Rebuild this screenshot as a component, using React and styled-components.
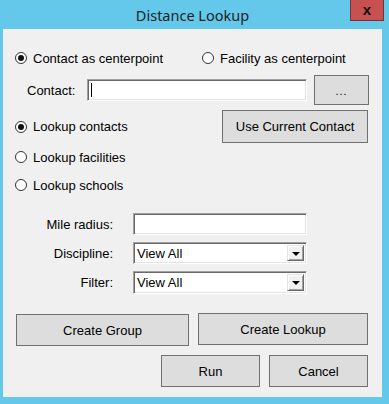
import React from "react";
import styled, { createGlobalStyle } from "styled-components";

const Global = createGlobalStyle`
  html, body { margin: 0; padding: 0; background: #63c8ea; }
  * { box-sizing: border-box; }
`;

const Frame = styled.div`
  width: 389px;
  height: 404px;
  background: #63c8ea;
  padding: 0 7px 7px 3px;
  display: flex;
  flex-direction: column;
  font-family: "Liberation Sans", Arial, sans-serif;
  font-size: 13px;
  color: #000;
`;

const TitleBar = styled.div`
  height: 29px;
  display: grid;
  grid-template-columns: 1fr auto 1fr;
  align-items: start;
`;

const Title = styled.div`
  grid-column: 2;
  font-family: "Noto Sans", "Open Sans", sans-serif;
  font-size: 14.5px;
  line-height: 20px;
  margin-top: 5px;
  color: #1e1e1e;
`;

const CloseButton = styled.div`
  grid-column: 3;
  justify-self: end;
  margin-right: -2px;
  width: 34px;
  height: 21px;
  background: #c75050;
  border: 1px solid #7d3030;
  border-top: none;
  display: flex;
  align-items: center;
  justify-content: center;
  font-family: "Liberation Sans", Arial, sans-serif;
  font-weight: bold;
  font-size: 15px;
  line-height: 1;
  color: #111;
  padding-bottom: 2px;
`;

const Client = styled.div`
  flex: 1;
  background: #f0f0f0;
  padding: 21px 14px 0 12px;
  display: flex;
  flex-direction: column;
`;

const RadioRow = styled.div`
  display: grid;
  grid-template-columns: 187px 1fr;
  height: 16px;
  align-items: center;
`;

const RadioLabel = styled.label`
  display: inline-flex;
  align-items: center;
  gap: 6px;
  height: 16px;
  white-space: nowrap;
`;

const Circle = styled.span`
  width: 12px;
  height: 12px;
  border-radius: 50%;
  border: 1px solid #333;
  background: #fff;
  display: flex;
  align-items: center;
  justify-content: center;
  flex: none;
  &::after {
    content: "";
    width: 6px;
    height: 6px;
    border-radius: 50%;
    background: ${(p) => (p.$checked ? "#111" : "transparent")};
  }
`;

const Radio = ({ checked, children }) => (
  <RadioLabel>
    <Circle $checked={checked} />
    <span>{children}</span>
  </RadioLabel>
);

const ContactRow = styled.div`
  margin-top: 9px;
  display: flex;
  align-items: center;
  height: 30px;
`;

const InlineLabel = styled.span`
  width: 60px;
  margin-left: 12px;
  flex: none;
`;

const TextBox = styled.div`
  width: ${(p) => p.$w}px;
  height: 22px;
  background: #fff;
  border: 1px solid;
  border-color: #a0a0a0 #ffffff #ffffff #a0a0a0;
  box-shadow: inset 1px 1px 0 #696969, inset -1px -1px 0 #e3e3e3;
  flex: none;
  position: relative;
`;

const Caret = styled.span`
  position: absolute;
  left: 3px;
  top: 3px;
  width: 1px;
  height: 14px;
  background: #000;
`;

const Button = styled.div`
  width: ${(p) => p.$w}px;
  height: ${(p) => p.$h || 32}px;
  background: #dddddd;
  border: 1px solid #707070;
  display: flex;
  align-items: center;
  justify-content: center;
  flex: none;
  white-space: nowrap;
  margin-top: ${(p) => p.$mt || 0}px;
  margin-left: ${(p) => p.$ml || 0}px;
`;

const Dots = styled.span`
  font-size: 11px;
  letter-spacing: 1px;
  margin-top: 2px;
  color: #000;
`;

const SpacedRow = styled.div`
  display: flex;
  align-items: center;
  justify-content: space-between;
  margin-top: ${(p) => p.$mt}px;
  height: ${(p) => p.$h}px;
`;

const FormGrid = styled.div`
  display: grid;
  grid-template-columns: 98px 174px;
  column-gap: 20px;
  row-gap: 7px;
  grid-auto-rows: 22px;
  margin-top: 20px;
  align-items: center;
`;

const FieldLabel = styled.span`
  text-align: right;
`;

const Select = styled.div`
  height: ${(p) => p.$h || 22}px;
  background: #fff;
  border: 1px solid;
  border-color: #a0a0a0 #ffffff #ffffff #a0a0a0;
  box-shadow: inset 1px 1px 0 #696969, inset -1px -1px 0 #e3e3e3;
  display: flex;
  align-items: stretch;
  padding: 2px;
`;

const SelectValue = styled.span`
  flex: 1;
  display: flex;
  align-items: center;
  padding-left: 1px;
`;

const DropButton = styled.span`
  width: 17px;
  background: #f0f0f0;
  border: 1px solid;
  border-color: #e3e3e3 #696969 #696969 #e3e3e3;
  box-shadow: inset 1px 1px 0 #fff, inset -1px -1px 0 #a0a0a0;
  display: flex;
  align-items: center;
  justify-content: center;
  &::after {
    content: "";
    border-left: 4px solid transparent;
    border-right: 4px solid transparent;
    border-top: 4px solid #000;
    margin-top: 1px;
  }
`;

const ButtonRow = styled.div`
  display: flex;
  align-items: flex-start;
  gap: ${(p) => p.$gap}px;
  justify-content: ${(p) => p.$justify || "flex-start"};
  margin-top: ${(p) => p.$mt}px;
  padding-left: ${(p) => p.$pl || 0}px;
`;

export default function App() {
  return (
    <>
      <Global />
      <Frame>
        <TitleBar>
          <Title>Distance Lookup</Title>
          <CloseButton>x</CloseButton>
        </TitleBar>
        <Client>
          <RadioRow>
            <Radio checked>Contact as centerpoint</Radio>
            <Radio>Facility as centerpoint</Radio>
          </RadioRow>

          <ContactRow>
            <InlineLabel>Contact:</InlineLabel>
            <TextBox $w={220}>
              <Caret />
            </TextBox>
            <Button $w={55} $h={30} $ml={7}>
              <Dots>...</Dots>
            </Button>
          </ContactRow>

          <SpacedRow $mt={5} $h={33}>
            <Radio checked>Lookup contacts</Radio>
            <Button $w={146} $h={33}>Use Current Contact</Button>
          </SpacedRow>

          <SpacedRow $mt={6} $h={16}>
            <Radio>Lookup facilities</Radio>
          </SpacedRow>
          <SpacedRow $mt={12} $h={16}>
            <Radio>Lookup schools</Radio>
          </SpacedRow>

          <FormGrid>
            <FieldLabel>Mile radius:</FieldLabel>
            <TextBox $w={174} />
            <FieldLabel>Discipline:</FieldLabel>
            <Select>
              <SelectValue>View All</SelectValue>
              <DropButton />
            </Select>
            <FieldLabel>Filter:</FieldLabel>
            <Select $h={23}>
              <SelectValue>View All</SelectValue>
              <DropButton />
            </Select>
          </FormGrid>

          <ButtonRow $mt={20} $gap={9} $pl={1}>
            <Button $w={173} $mt={1}>Create Group</Button>
            <Button $w={170}>Create Lookup</Button>
          </ButtonRow>
          <ButtonRow $mt={9} $gap={9} $justify="flex-end">
            <Button $w={99}>Run</Button>
            <Button $w={99}>Cancel</Button>
          </ButtonRow>
        </Client>
      </Frame>
    </>
  );
}
